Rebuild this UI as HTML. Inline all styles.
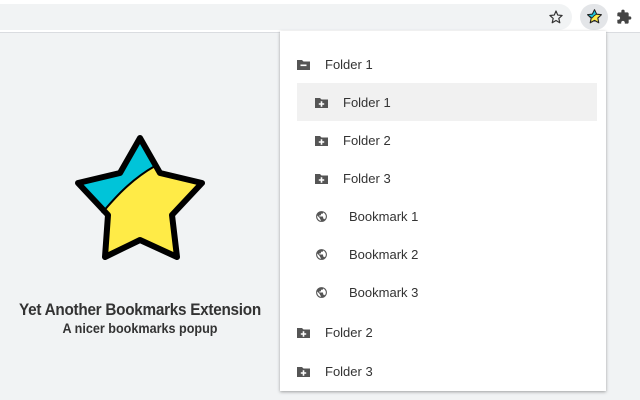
<!DOCTYPE html>
<html><head><style>
*{margin:0;padding:0;box-sizing:border-box}
body{width:640px;height:400px;overflow:hidden;background:#f1f3f4;position:relative;font-family:"Liberation Sans",sans-serif}
.top{position:absolute;left:0;top:0;width:640px;height:33px;background:#fff;border-bottom:1px solid #dadce0}
.omni{position:absolute;left:-20px;top:4px;width:592px;height:26px;border-radius:13px;background:#f1f3f4}
.ext{position:absolute;left:580px;top:4px;width:28px;height:26px;border-radius:13px;background:#e3e5e8}
.pop{position:absolute;left:280px;top:31px;width:326px;height:360px;background:#fff;box-shadow:0 1px 3px rgba(0,0,0,.35)}
.row{position:absolute;height:38px;display:flex;align-items:center;font-size:13px;color:#333}
.row svg{position:absolute}
.hl{background:#f1f1f1}
.t1{position:absolute;left:0;width:280px;text-align:center;font-weight:bold;color:#333}
</style></head><body>
<div class="top"><div class="omni"></div><div class="ext"></div>
<svg style="position:absolute;left:548px;top:9px" width="16" height="16" viewBox="0 0 24 24"><path d="M12 3l2.6 6.1 6.6.6-5 4.4 1.5 6.5L12 17.2l-5.7 3.4 1.5-6.5-5-4.4 6.6-.6z" fill="none" stroke="#333" stroke-width="1.8" stroke-linejoin="round"/></svg>
<svg style="position:absolute;left:586px;top:8px" width="17" height="17" viewBox="0 0 24 24"><path d="M12 2.5l2.9 6.2 6.8.8-5 4.7 1.3 6.7L12 17.5l-6 3.4 1.3-6.7-5-4.7 6.8-.8z" fill="#ffeb47" stroke="#222" stroke-width="1.6" stroke-linejoin="round"/><path d="M12 2.5l2.9 6.2c-3 1.5-5 3.5-6.4 5.5l-6.2-4.7 6.8-.8z" fill="#1ec6dc" stroke="#222" stroke-width="1.2" stroke-linejoin="round"/></svg>
<svg style="position:absolute;left:616px;top:9px" width="16" height="16" viewBox="0 0 24 24"><path d="M20.5 11H19V7c0-1.1-.9-2-2-2h-4V3.5a2.5 2.5 0 0 0-5 0V5H4c-1.1 0-2 .9-2 2v3.8h1.5c1.5 0 2.7 1.2 2.7 2.7S5 16.2 3.5 16.2H2V20c0 1.1.9 2 2 2h3.8v-1.5c0-1.5 1.2-2.7 2.7-2.7s2.7 1.2 2.7 2.7V22H17c1.1 0 2-.9 2-2v-4h1.5a2.5 2.5 0 0 0 0-5z" fill="#444"/></svg>
</div>
<svg style="position:absolute;left:0;top:0" width="280" height="300">
<path d="M140 138 L160 173 L202 183 L172 215 L177 257 L140 240 L105 257 L108 215 L78 183 L120 173 Z" fill="#ffeb47"/>
<path d="M140 138 L155 166 C130 180 113 200 102 213 L78 183 L120 173 Z" fill="#00c4d9"/>
<path d="M155 166 C130 180 113 200 102 213" fill="none" stroke="#000" stroke-width="2"/>
<path d="M140 138 L160 173 L202 183 L172 215 L177 257 L140 240 L105 257 L108 215 L78 183 L120 173 Z" fill="none" stroke="#000" stroke-width="6" stroke-linejoin="round"/>
</svg>
<div class="t1" style="top:300px;font-size:17px;letter-spacing:-0.3px;transform:scaleX(.9)">Yet Another Bookmarks Extension</div>
<div class="t1" style="top:320px;font-size:14px;transform:scaleX(.9)">A nicer bookmarks popup</div>
<div class="pop">
<div class="row" style="left:0;top:14px;width:326px"><svg style="left:17px" width="13" height="11" viewBox="0 0 13 11"><path d="M0 1h5l1.5 1.5H13V11H0z" fill="#555"/><rect x="3.5" y="5.5" width="6" height="1.6" fill="#fff"/></svg><span style="position:absolute;left:45px">Folder 1</span></div>
<div class="row hl" style="left:17px;top:52px;width:300px"><svg style="left:18px" width="13" height="11" viewBox="0 0 13 11"><path d="M0 1h5l1.5 1.5H13V11H0z" fill="#555"/><path d="M5.7 4.3h1.6v1.9h1.9v1.6H7.3v1.9H5.7V7.8H3.8V6.2h1.9z" fill="#fff"/></svg><span style="position:absolute;left:46px">Folder 1</span></div>
<div class="row" style="left:17px;top:90px;width:300px"><svg style="left:18px" width="13" height="11" viewBox="0 0 13 11"><path d="M0 1h5l1.5 1.5H13V11H0z" fill="#555"/><path d="M5.7 4.3h1.6v1.9h1.9v1.6H7.3v1.9H5.7V7.8H3.8V6.2h1.9z" fill="#fff"/></svg><span style="position:absolute;left:46px">Folder 2</span></div>
<div class="row" style="left:17px;top:128px;width:300px"><svg style="left:18px" width="13" height="11" viewBox="0 0 13 11"><path d="M0 1h5l1.5 1.5H13V11H0z" fill="#555"/><path d="M5.7 4.3h1.6v1.9h1.9v1.6H7.3v1.9H5.7V7.8H3.8V6.2h1.9z" fill="#fff"/></svg><span style="position:absolute;left:46px">Folder 3</span></div>
<div class="row" style="left:17px;top:166px;width:300px"><svg style="left:18px" width="13" height="13" viewBox="0 0 24 24"><path d="M12 2a10 10 0 1 0 0 20 10 10 0 0 0 0-20zm-1 17.9A8 8 0 0 1 4 12c0-.6.1-1.2.2-1.8L9 15v1c0 1.1.9 2 2 2zm6.9-2.5c-.3-.8-1-1.4-1.9-1.4h-1v-3c0-.6-.4-1-1-1H8v-2h2c.6 0 1-.4 1-1V7h2c1.1 0 2-.9 2-2v-.4a8 8 0 0 1 2.9 12.8z" fill="#555"/></svg><span style="position:absolute;left:52px">Bookmark 1</span></div>
<div class="row" style="left:17px;top:204px;width:300px"><svg style="left:18px" width="13" height="13" viewBox="0 0 24 24"><path d="M12 2a10 10 0 1 0 0 20 10 10 0 0 0 0-20zm-1 17.9A8 8 0 0 1 4 12c0-.6.1-1.2.2-1.8L9 15v1c0 1.1.9 2 2 2zm6.9-2.5c-.3-.8-1-1.4-1.9-1.4h-1v-3c0-.6-.4-1-1-1H8v-2h2c.6 0 1-.4 1-1V7h2c1.1 0 2-.9 2-2v-.4a8 8 0 0 1 2.9 12.8z" fill="#555"/></svg><span style="position:absolute;left:52px">Bookmark 2</span></div>
<div class="row" style="left:17px;top:242px;width:300px"><svg style="left:18px" width="13" height="13" viewBox="0 0 24 24"><path d="M12 2a10 10 0 1 0 0 20 10 10 0 0 0 0-20zm-1 17.9A8 8 0 0 1 4 12c0-.6.1-1.2.2-1.8L9 15v1c0 1.1.9 2 2 2zm6.9-2.5c-.3-.8-1-1.4-1.9-1.4h-1v-3c0-.6-.4-1-1-1H8v-2h2c.6 0 1-.4 1-1V7h2c1.1 0 2-.9 2-2v-.4a8 8 0 0 1 2.9 12.8z" fill="#555"/></svg><span style="position:absolute;left:52px">Bookmark 3</span></div>
<div class="row" style="left:0;top:282px;width:326px"><svg style="left:17px" width="13" height="11" viewBox="0 0 13 11"><path d="M0 1h5l1.5 1.5H13V11H0z" fill="#555"/><path d="M5.7 4.3h1.6v1.9h1.9v1.6H7.3v1.9H5.7V7.8H3.8V6.2h1.9z" fill="#fff"/></svg><span style="position:absolute;left:45px">Folder 2</span></div>
<div class="row" style="left:0;top:321px;width:326px"><svg style="left:17px" width="13" height="11" viewBox="0 0 13 11"><path d="M0 1h5l1.5 1.5H13V11H0z" fill="#555"/><path d="M5.7 4.3h1.6v1.9h1.9v1.6H7.3v1.9H5.7V7.8H3.8V6.2h1.9z" fill="#fff"/></svg><span style="position:absolute;left:45px">Folder 3</span></div>
</div>
</body></html>
